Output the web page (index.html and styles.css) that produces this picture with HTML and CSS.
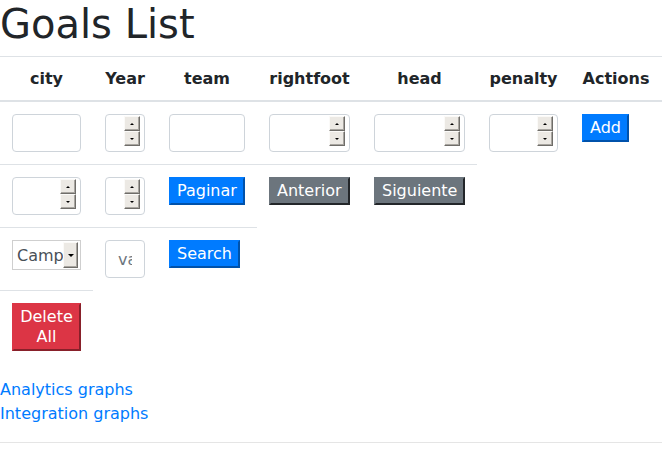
FILE: index.html
```html
<!DOCTYPE html>
<html lang="en">
<head>
<meta charset="utf-8">
<title>Goals List</title>
<link rel="stylesheet" href="styles.css">
</head>
<body>
<h1 class="title">Goals List</h1>
<table class="goals">
  <colgroup>
    <col class="c-city"><col class="c-year"><col class="c-team"><col class="c-right"><col class="c-head"><col class="c-pen"><col class="c-act">
  </colgroup>
  <thead>
    <tr><th>city</th><th>Year</th><th>team</th><th>rightfoot</th><th>head</th><th>penalty</th><th>Actions</th></tr>
  </thead>
  <tbody>
    <tr>
      <td><input class="field" type="text"></td>
      <td><div class="num"><input class="num-in" type="number"><span class="spin"><span class="sb up"></span><span class="sb dn"></span></span></div></td>
      <td><input class="field" type="text"></td>
      <td><div class="num"><input class="num-in" type="number"><span class="spin"><span class="sb up"></span><span class="sb dn"></span></span></div></td>
      <td><div class="num"><input class="num-in" type="number"><span class="spin"><span class="sb up"></span><span class="sb dn"></span></span></div></td>
      <td><div class="num"><input class="num-in" type="number"><span class="spin"><span class="sb up"></span><span class="sb dn"></span></span></div></td>
      <td><button class="btn btn-primary">Add</button></td>
    </tr>
    <tr>
      <td><div class="num"><input class="num-in" type="number"><span class="spin"><span class="sb up"></span><span class="sb dn"></span></span></div></td>
      <td><div class="num"><input class="num-in" type="number"><span class="spin"><span class="sb up"></span><span class="sb dn"></span></span></div></td>
      <td><button class="btn btn-primary">Paginar</button></td>
      <td><button class="btn btn-secondary">Anterior</button></td>
      <td><button class="btn btn-secondary">Siguiente</button></td>
    </tr>
    <tr>
      <td><span class="sel"><select class="sel-box"><option>Campo</option></select><span class="dd"></span></span></td>
      <td><input class="field" type="text" placeholder="value"></td>
      <td><button class="btn btn-primary">Search</button></td>
    </tr>
    <tr>
      <td><button class="btn btn-danger btn-full">Delete All</button></td>
    </tr>
  </tbody>
</table>
<div class="links">
  <a href="#" class="link">Analytics graphs</a>
  <a href="#" class="link">Integration graphs</a>
</div>
<hr class="rule">
</body>
</html>
```

FILE: styles.css
```css
html, body {
  margin: 0;
  padding: 0;
}
body {
  font-family: "DejaVu Sans", sans-serif;
  font-size: 16px;
  line-height: 1.5;
  color: #212529;
  background: #fff;
}
.title {
  margin: 0 0 8px 0;
  font-size: 40px;
  font-weight: 500;
  line-height: 48px;
}
.goals {
  width: 662px;
  table-layout: fixed;
  border-collapse: collapse;
  margin-bottom: 15px;
}
.c-city { width: 93px; }
.c-year { width: 64px; }
.c-team { width: 100px; }
.c-right { width: 105px; }
.c-head { width: 115px; }
.c-pen { width: 93px; }
.c-act { width: 92px; }
.goals th {
  padding: 12px 0;
  font-weight: bold;
  line-height: 19px;
  text-align: center;
  vertical-align: bottom;
  border-top: 1px solid #dee2e6;
  border-bottom: 2px solid #dee2e6;
  white-space: nowrap;
}
.goals td {
  padding: 12px;
  vertical-align: top;
  border-top: 1px solid #dee2e6;
  line-height: 20px;
}
.goals tbody tr:first-child td {
  border-top: 2px solid #dee2e6;
}
.field {
  display: block;
  box-sizing: border-box;
  width: 100%;
  height: 38px;
  margin: 0;
  padding: 6px 12px;
  font: 16px/24px "DejaVu Sans", sans-serif;
  color: #495057;
  border: 1px solid #ced4da;
  border-radius: 4px;
  background: #fff;
  outline: none;
}
.field::placeholder {
  color: #6c757d;
}
.num {
  display: flex;
  box-sizing: border-box;
  width: 100%;
  height: 38px;
  border: 1px solid #ced4da;
  border-radius: 4px;
  background: #fff;
}
.num-in {
  flex: 1;
  min-width: 0;
  border: 0;
  margin: 0;
  padding: 0 0 0 12px;
  background: transparent;
  font: 16px "DejaVu Sans", sans-serif;
  outline: none;
  -moz-appearance: textfield;
}
.num-in::-webkit-inner-spin-button,
.num-in::-webkit-outer-spin-button {
  -webkit-appearance: none;
  margin: 0;
}
.spin {
  display: flex;
  flex-direction: column;
  width: 16px;
  margin: 1px 4px 0 0;
  align-self: flex-start;
}
.sb {
  display: flex;
  align-items: center;
  justify-content: center;
  box-sizing: border-box;
  height: 15px;
  background: #ece9e4;
  border: 1px solid;
  border-color: #fbfaf8 #6f6d69 #6f6d69 #fbfaf8;
  box-shadow: inset -1px -1px 0 #a8a5a0;
}
.sb::after {
  content: "";
  width: 0;
  height: 0;
  border-left: 2px solid transparent;
  border-right: 2px solid transparent;
}
.up::after {
  border-bottom: 2px solid #000;
}
.dn::after {
  border-top: 2px solid #000;
}
.btn {
  margin: 0;
  padding: 2px 6px;
  font: 16px/20px "DejaVu Sans", sans-serif;
  color: #fff;
  border: 2px outset;
  border-radius: 0;
  text-align: center;
  cursor: pointer;
}
.btn-primary {
  background: #007bff;
  border-color: #007bff;
}
.btn-secondary {
  background: #6c757d;
  border-color: #6c757d;
}
.btn-danger {
  background: #dc3545;
  border-color: #dc3545;
}
.btn-full {
  display: block;
  width: 100%;
}
.sel {
  display: flex;
  box-sizing: border-box;
  width: 69px;
  height: 30px;
  border: 1px solid #cfcfcf;
  background: #fff;
}
.sel-box {
  flex: 1;
  min-width: 0;
  margin: 0;
  padding: 0 0 0 4px;
  border: 0;
  background: transparent;
  font: 16px "DejaVu Sans", sans-serif;
  color: #495057;
  -webkit-appearance: none;
  appearance: none;
  outline: none;
}
.dd {
  display: flex;
  align-items: center;
  justify-content: center;
  box-sizing: border-box;
  width: 15px;
  height: 26px;
  margin: 1px 2px 1px 0;
  background: #ece9e4;
  border: 1px solid;
  border-color: #fbfaf8 #6f6d69 #6f6d69 #fbfaf8;
  box-shadow: inset -1px -1px 0 #a8a5a0;
}
.dd::after {
  content: "";
  width: 0;
  height: 0;
  border-left: 3px solid transparent;
  border-right: 3px solid transparent;
  border-top: 3px solid #000;
}
.links {
  line-height: 24px;
}
.link {
  display: block;
  color: #007bff;
  text-decoration: none;
}
.rule {
  margin: 16px 0;
  border: 0;
  border-top: 1px solid rgba(0, 0, 0, 0.1);
  height: 0;
}
```
